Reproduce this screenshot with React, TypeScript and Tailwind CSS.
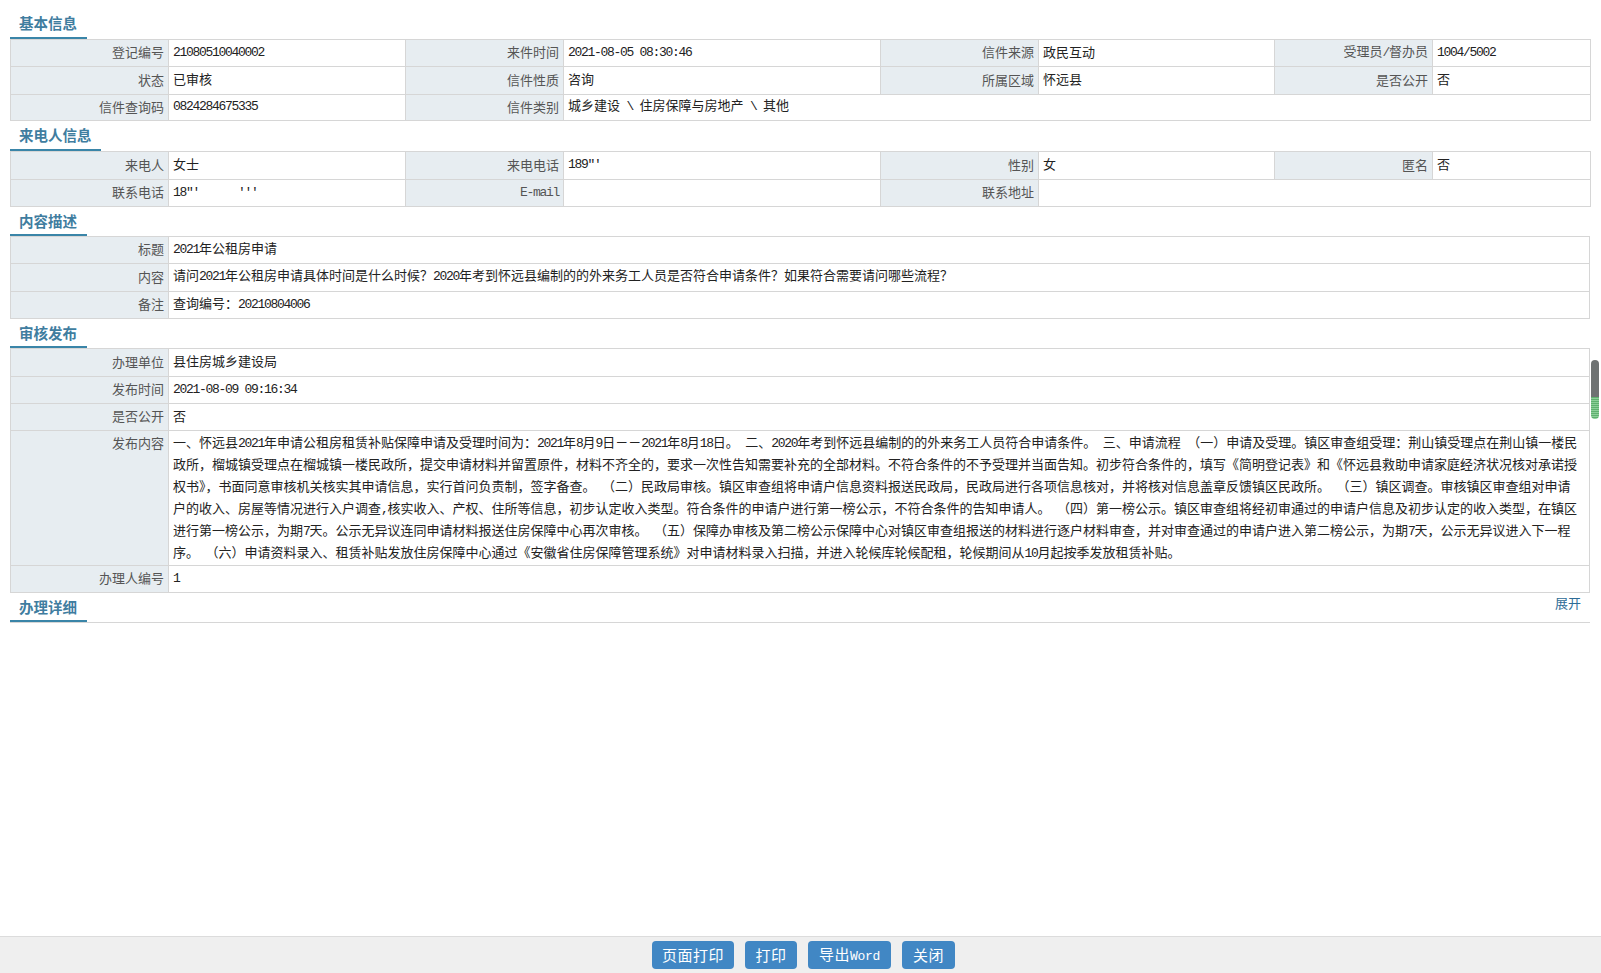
import { ReactNode } from "react";

const cjk = "font-['Noto_Sans_CJK_SC','Liberation_Sans',sans-serif]";

// latin runs sit at half the width of the hanzi, like the bitmap font in the picture
function T({ children, latin = "text-[13px] tracking-[-1.3px]" }: { children: string; latin?: string }) {
  return (
    <>
      {children.split(/([\x20-\x7e]+)/).map((part, i) =>
        i % 2 ? (
          <span key={i} className={`font-['Liberation_Mono',monospace] whitespace-pre ${latin}`}>
            {part}
          </span>
        ) : (
          <span key={i}>{part}</span>
        )
      )}
    </>
  );
}

function Title({ text, line, h = "h-[30px]", right }: { text: string; line: string; h?: string; right?: ReactNode }) {
  return (
    <div className={`relative flex items-center justify-between pl-[9px] pr-2 ${h}`}>
      <span className="text-[14.5px] font-bold text-[#3f7d9f] leading-none mb-[1px]">{text}</span>
      {right}
      <div className={`absolute left-0 bottom-0 h-[2px] bg-[#3a85a8] ${line}`} />
    </div>
  );
}

function L({ children }: { children: string }) {
  return (
    <td className="bg-[#e7edf1] border border-[#d6d6d6] text-right pr-1 pb-[3px] text-[#555] whitespace-nowrap">
      <T>{children}</T>
    </td>
  );
}

function V({ children, span }: { children?: string; span?: number }) {
  return (
    <td colSpan={span} className="bg-white border border-[#d6d6d6] pl-1 pb-[4px] text-[#222] whitespace-nowrap overflow-hidden">
      {children ? <T>{children}</T> : null}
    </td>
  );
}

function Cols4() {
  return (
    <colgroup>
      <col className="w-[158px]" />
      <col className="w-[237px]" />
      <col className="w-[158px]" />
      <col className="w-[317px]" />
      <col className="w-[158px]" />
      <col className="w-[236px]" />
      <col className="w-[158px]" />
      <col className="w-[158px]" />
    </colgroup>
  );
}

const tableCls = "w-full table-fixed border-collapse text-[13px] leading-none";

const lines = [
  "一、怀远县2021年申请公租房租赁补贴保障申请及受理时间为：2021年8月9日－－2021年8月18日。 二、2020年考到怀远县编制的的外来务工人员符合申请条件。 三、申请流程 （一）申请及受理。镇区审查组受理：荆山镇受理点在荆山镇一楼民",
  "政所，榴城镇受理点在榴城镇一楼民政所，提交申请材料并留置原件，材料不齐全的，要求一次性告知需要补充的全部材料。不符合条件的不予受理并当面告知。初步符合条件的，填写《简明登记表》和《怀远县救助申请家庭经济状况核对承诺授",
  "权书》，书面同意审核机关核实其申请信息，实行首问负责制，签字备查。 （二）民政局审核。镇区审查组将申请户信息资料报送民政局，民政局进行各项信息核对，并将核对信息盖章反馈镇区民政所。 （三）镇区调查。审核镇区审查组对申请",
  "户的收入、房屋等情况进行入户调查,核实收入、产权、住所等信息，初步认定收入类型。符合条件的申请户进行第一榜公示，不符合条件的告知申请人。 （四）第一榜公示。镇区审查组将经初审通过的申请户信息及初步认定的收入类型，在镇区",
  "进行第一榜公示，为期7天。公示无异议连同申请材料报送住房保障中心再次审核。 （五）保障办审核及第二榜公示保障中心对镇区审查组报送的材料进行逐户材料审查，并对审查通过的申请户进入第二榜公示，为期7天，公示无异议进入下一程",
  "序。 （六）申请资料录入、租赁补贴发放住房保障中心通过《安徽省住房保障管理系统》对申请材料录入扫描，并进入轮候库轮候配租，轮候期间从10月起按季发放租赁补贴。",
];

function Btn({ children, w }: { children: string; w: string }) {
  return (
    <button className={`h-[28px] rounded-[4px] bg-[#4187c4] text-white text-[15px] tracking-[0.5px] ${w}`}>
      <T latin="text-[13px] tracking-[-0.3px]">{children}</T>
    </button>
  );
}

export default function App() {
  return (
    <div className={`relative h-[973px] w-[1601px] flex flex-col bg-white overflow-hidden ${cjk}`}>
      <div className="flex-1 pt-[9px] pl-[10px] pr-[11px]">
        <Title text="基本信息" line="w-[77px]" />
        <table className={tableCls}>
          <Cols4 />
          <tbody>
            <tr className="h-[27px]">
              <L>登记编号</L>
              <V>21080510040002</V>
              <L>来件时间</L>
              <V>2021-08-05 08:30:46</V>
              <L>信件来源</L>
              <V>政民互动</V>
              <L>受理员/督办员</L>
              <V>1004/5002</V>
            </tr>
            <tr className="h-[28px]">
              <L>状态</L>
              <V>已审核</V>
              <L>信件性质</L>
              <V>咨询</V>
              <L>所属区域</L>
              <V>怀远县</V>
              <L>是否公开</L>
              <V>否</V>
            </tr>
            <tr className="h-[26px]">
              <L>信件查询码</L>
              <V>0824284675335</V>
              <L>信件类别</L>
              <V span={5}>城乡建设 \ 住房保障与房地产 \ 其他</V>
            </tr>
          </tbody>
        </table>

        <Title text="来电人信息" line="w-[91px]" />
        <table className={tableCls}>
          <Cols4 />
          <tbody>
            <tr className="h-[28px]">
              <L>来电人</L>
              <V>女士</V>
              <L>来电电话</L>
              <V>{'189"\''}</V>
              <L>性别</L>
              <V>女</V>
              <L>匿名</L>
              <V>否</V>
            </tr>
            <tr className="h-[27px]">
              <L>联系电话</L>
              <V>{'18"\'      \'\'\''}</V>
              <L>E-mail</L>
              <V />
              <L>联系地址</L>
              <V span={3} />
            </tr>
          </tbody>
        </table>

        <Title text="内容描述" line="w-[77px]" h="h-[29px]" />
        <table className={tableCls}>
          <colgroup>
            <col className="w-[158px]" />
            <col />
          </colgroup>
          <tbody>
            <tr className="h-[27px]">
              <L>标题</L>
              <V>2021年公租房申请</V>
            </tr>
            <tr className="h-[28px]">
              <L>内容</L>
              <V>请问2021年公租房申请具体时间是什么时候？2020年考到怀远县编制的的外来务工人员是否符合申请条件？如果符合需要请问哪些流程？</V>
            </tr>
            <tr className="h-[27px]">
              <L>备注</L>
              <V>查询编号：20210804006</V>
            </tr>
          </tbody>
        </table>

        <Title text="审核发布" line="w-[77px]" h="h-[29px]" />
        <table className={tableCls}>
          <colgroup>
            <col className="w-[158px]" />
            <col />
          </colgroup>
          <tbody>
            <tr className="h-[28px]">
              <L>办理单位</L>
              <V>县住房城乡建设局</V>
            </tr>
            <tr className="h-[27px]">
              <L>发布时间</L>
              <V>2021-08-09 09:16:34</V>
            </tr>
            <tr className="h-[27px]">
              <L>是否公开</L>
              <V>否</V>
            </tr>
            <tr className="h-[135px]">
              <td className="bg-[#e7edf1] border border-[#d6d6d6] text-right pr-1 pt-[5px] align-top text-[#555]">发布内容</td>
              <td className="bg-white border border-[#d6d6d6] pl-1 text-[#222] align-top">
                {lines.map((line) => (
                  <div key={line} className="h-[22px] leading-[22px] whitespace-pre overflow-hidden">
                    <T>{line}</T>
                  </div>
                ))}
              </td>
            </tr>
            <tr className="h-[27px]">
              <L>办理人编号</L>
              <V>1</V>
            </tr>
          </tbody>
        </table>

        <div className="border-b border-[#d6d6d6]">
          <Title
            text="办理详细"
            line="w-[77px]"
            h="h-[29px]"
            right={<a className="text-[13px] text-[#2d6b96] mb-[9px] pr-[1px]">展开</a>}
          />
        </div>
      </div>

      <div className="h-[37px] bg-[#efefef] border-t border-[#dcdcdc] flex items-center justify-center gap-[11px] pl-[6px]">
        <Btn w="w-[82px]">页面打印</Btn>
        <Btn w="w-[52px]">打印</Btn>
        <Btn w="w-[83px]">导出Word</Btn>
        <Btn w="w-[53px]">关闭</Btn>
      </div>

      {/* scrollbar thumb of the outer frame */}
      <div className="absolute left-[1591px] top-[360px] w-[8px] h-[59px] rounded-[4px] overflow-hidden flex flex-col">
        <div className="h-[37px] bg-[#6e7272]" />
        <div className="flex-1 bg-[repeating-linear-gradient(#5fb06f_0,#5fb06f_1px,#8ccf98_1px,#8ccf98_2px)]" />
      </div>
    </div>
  );
}
